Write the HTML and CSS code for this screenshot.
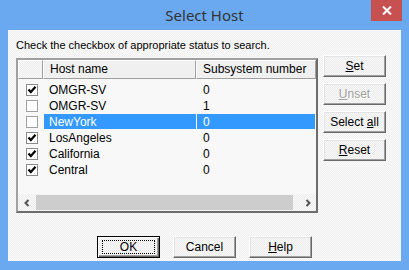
FILE: index.html
```html
<!DOCTYPE html>
<html lang="en">
<head>
    <meta charset="UTF-8">
    <meta name="viewport" content="width=device-width, initial-scale=1.0">
    <title>Select Host</title>
    <link rel="stylesheet" href="styles.css">
</head>
<body>
    <div class="window">
        <div class="titlebar">
            <span></span>
            <span class="title">Select Host</span>
            <span class="close-cell">
                <span class="close">
                    <svg width="10" height="9" viewBox="0 0 10 9"><path d="M1 0.5 L9 8.5 M9 0.5 L1 8.5" stroke="#fff" stroke-width="2"/></svg>
                </span>
            </span>
        </div>

        <div class="client">
            <div class="hint">Check the checkbox of appropriate status to search.</div>

            <div class="content">
                <div class="listbox">
                    <div class="list-head">
                        <div class="hcell"></div>
                        <div class="hcell">Host name</div>
                        <div class="hcell">Subsystem number</div>
                    </div>

                    <div class="rows">
                        <div class="row">
                            <div class="cell-check"><span class="check checked"><svg width="10" height="10" viewBox="0 0 10 10"><polyline points="1.5,4.5 3.8,7 8.5,1.8" fill="none" stroke="#000" stroke-width="2.2"/></svg></span></div>
                            <div class="cell-name">OMGR-SV</div>
                            <div class="cell-num">0</div>
                        </div>
                        <div class="row">
                            <div class="cell-check"><span class="check"></span></div>
                            <div class="cell-name">OMGR-SV</div>
                            <div class="cell-num">1</div>
                        </div>
                        <div class="row selected">
                            <div class="cell-check"><span class="check"></span></div>
                            <div class="cell-name">NewYork</div>
                            <div class="cell-num">0</div>
                        </div>
                        <div class="row">
                            <div class="cell-check"><span class="check checked"><svg width="10" height="10" viewBox="0 0 10 10"><polyline points="1.5,4.5 3.8,7 8.5,1.8" fill="none" stroke="#000" stroke-width="2.2"/></svg></span></div>
                            <div class="cell-name">LosAngeles</div>
                            <div class="cell-num">0</div>
                        </div>
                        <div class="row">
                            <div class="cell-check"><span class="check checked"><svg width="10" height="10" viewBox="0 0 10 10"><polyline points="1.5,4.5 3.8,7 8.5,1.8" fill="none" stroke="#000" stroke-width="2.2"/></svg></span></div>
                            <div class="cell-name">California</div>
                            <div class="cell-num">0</div>
                        </div>
                        <div class="row">
                            <div class="cell-check"><span class="check checked"><svg width="10" height="10" viewBox="0 0 10 10"><polyline points="1.5,4.5 3.8,7 8.5,1.8" fill="none" stroke="#000" stroke-width="2.2"/></svg></span></div>
                            <div class="cell-name">Central</div>
                            <div class="cell-num">0</div>
                        </div>
                    </div>

                    <div class="hscroll">
                        <span class="arrow"><svg width="8" height="8" viewBox="0 0 8 8"><polyline points="5.5,1 2.5,4 5.5,7" fill="none" stroke="#555" stroke-width="2"/></svg></span>
                        <span class="track"><span class="thumb"></span></span>
                        <span class="arrow"><svg width="8" height="8" viewBox="0 0 8 8"><polyline points="2.5,1 5.5,4 2.5,7" fill="none" stroke="#555" stroke-width="2"/></svg></span>
                    </div>
                </div>

                <div class="side-buttons">
                    <button class="btn"><u>S</u>et</button>
                    <button class="btn disabled"><u>U</u>nset</button>
                    <button class="btn">Select <u>a</u>ll</button>
                    <button class="btn"><u>R</u>eset</button>
                </div>
            </div>

            <div class="bottom-buttons">
                <button class="btn default"><span class="focus">OK</span></button>
                <button class="btn">Cancel</button>
                <button class="btn"><u>H</u>elp</button>
            </div>
        </div>
    </div>
</body>
</html>
```

FILE: styles.css
```css
body {
    margin: 0;
    padding: 0;
    font-family: 'Liberation Sans', Arial, sans-serif;
    font-size: 12px;
    color: #000;
}
.window {
    width: 409px;
    height: 270px;
    background-color: #6aa9f0;
    display: flex;
    flex-direction: column;
}
.titlebar {
    height: 30px;
    display: grid;
    grid-template-columns: 1fr auto 1fr;
}
.title {
    font-family: 'Noto Sans', 'Open Sans', sans-serif;
    font-size: 15px;
    color: #333;
    line-height: 31px;
}
.close-cell {
    display: flex;
    justify-content: flex-end;
    align-items: flex-start;
    padding-right: 7px;
}
.close {
    width: 31px;
    height: 21px;
    background-color: #c75050;
    display: flex;
    align-items: center;
    justify-content: center;
}
.client {
    margin: 0 8px 9px 8px;
    height: 231px;
    box-sizing: border-box;
    padding: 8px 0 0 8px;
    background: repeating-conic-gradient(#efefef 0 25%, #fbfbfb 0 50%) 0 0 / 2px 2px;
}
.hint {
    height: 14px;
    line-height: 15px;
    font-size: 11px;
}
.content {
    display: flex;
    gap: 5px;
    margin-top: 3px;
}
.listbox {
    margin-top: 3px;
    width: 302px;
    height: 155px;
    box-sizing: border-box;
    border: 2px solid;
    border-color: #a0a0a0 #6d6d6d #6d6d6d #a0a0a0;
    background-color: #f8f8f8;
    display: flex;
    flex-direction: column;
}
.list-head {
    display: grid;
    grid-template-columns: 25px 153px 1fr;
    height: 19px;
}
.hcell {
    box-sizing: border-box;
    background-color: #f0f0f0;
    border-top: 1px solid #fff;
    border-left: 1px solid #fff;
    border-right: 1px solid #a0a0a0;
    border-bottom: 1px solid #a0a0a0;
    padding-left: 6px;
    line-height: 17px;
}
.hcell:first-child {
    background: repeating-conic-gradient(#ececec 0 25%, #fafafa 0 50%) 0 0 / 2px 2px;
}
.rows {
    padding-top: 3px;
}
.row {
    display: grid;
    grid-template-columns: 25px 153px 1fr;
    height: 16px;
    line-height: 16px;
}
.cell-check {
    padding: 2px 0 0 8px;
}
.check {
    display: flex;
    align-items: center;
    justify-content: center;
    width: 12px;
    height: 12px;
    box-sizing: border-box;
    border: 1px solid #a0a0a0;
    background-color: #fff;
}
.check.checked {
    border-color: #8a8a8a;
}
.cell-name {
    padding-left: 5px;
    margin-left: 1px;
}
.cell-num {
    padding-left: 6px;
    border-left: 1px solid transparent;
    margin-right: 1px;
}
.row.selected .cell-name,
.row.selected .cell-num {
    background-color: #3399ff;
    color: #fff;
    height: 15px;
}
.row.selected .cell-num {
    border-left-color: #fff;
}
.hscroll {
    margin-top: auto;
    height: 17px;
    display: flex;
    background: repeating-conic-gradient(#ececec 0 25%, #fafafa 0 50%) 0 0 / 2px 2px;
}
.arrow {
    width: 17px;
    display: flex;
    align-items: center;
    justify-content: center;
}
.track {
    flex: 1;
    padding: 1px 6px 1px 1px;
    display: flex;
}
.thumb {
    flex: 1;
    background-color: #cdcdcd;
}
.side-buttons {
    display: flex;
    flex-direction: column;
    gap: 6px;
}
.btn {
    width: 63px;
    height: 22px;
    box-sizing: border-box;
    padding: 0;
    font-family: 'Liberation Sans', Arial, sans-serif;
    font-size: 12px;
    color: #000;
    border: 1px solid;
    border-color: #fff #696969 #696969 #fff;
    box-shadow: inset -1px -1px 0 #a0a0a0, inset 1px 1px 0 #e3e3e3;
    background: repeating-conic-gradient(#ececec 0 25%, #f8f8f8 0 50%) 0 0 / 2px 2px;
}
.btn.disabled {
    color: #a0a0a0;
    text-shadow: 1px 1px 0 #fff;
}
.btn.default {
    border-color: #000;
    box-shadow: inset 1px 1px 0 #fff, inset -1px -1px 0 #696969, inset -2px -2px 0 #a0a0a0;
    padding: 3px 4px;
}
.focus {
    display: block;
    height: 100%;
    box-sizing: border-box;
    border: 1px dotted #000;
    line-height: 12px;
}
.bottom-buttons {
    display: flex;
    justify-content: center;
    gap: 13px;
    margin-top: 23px;
    margin-left: -8px;
}
```
